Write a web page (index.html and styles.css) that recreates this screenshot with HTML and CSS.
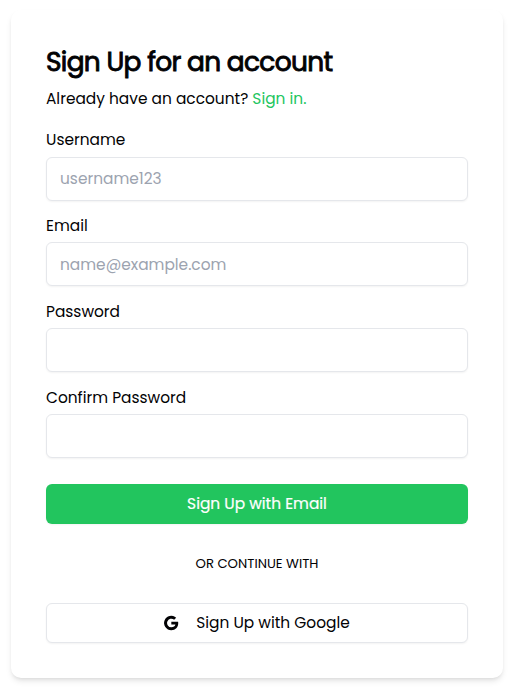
FILE: index.html
```html
<!DOCTYPE html>
<html lang="en">
<head>
<meta charset="utf-8">
<title>Sign Up</title>
<link rel="stylesheet" href="styles.css">
</head>
<body>
<main class="card">
  <h1 class="title">Sign Up for an account</h1>
  <p class="subtitle">Already have an account? <a class="link" href="#">Sign in.</a></p>
  <form class="form">
    <div class="field"><label for="username">Username</label><input id="username" type="text" placeholder="username123"></div>
    <div class="field"><label for="email">Email</label><input id="email" type="email" placeholder="name@example.com"></div>
    <div class="field"><label for="password">Password</label><input id="password" type="password"></div>
    <div class="field"><label for="confirm">Confirm Password</label><input id="confirm" type="password"></div>
    <button class="button primary" type="submit">Sign Up with Email</button>
  </form>
  <p class="divider">OR CONTINUE WITH</p>
  <button class="button google" type="button">
    <svg class="icon" viewBox="0 0 24 24" aria-hidden="true"><path d="M12.48 10.2v4.05h6.1c-.5 2.55-2.7 4.15-6.1 4.15A6.4 6.4 0 1 1 16.7 7.15l3.05-3.05A10.8 10.8 0 1 0 12.48 22.8c6.2 0 10.35-4.35 10.35-10.5 0-.75-.08-1.45-.2-2.1z"/></svg>
    <span>Sign Up with Google</span>
  </button>
</main>
</body>
</html>
```
FILE: styles.css
```css
* { box-sizing: border-box; }
body {
  margin: 0;
  padding: 10px 11px;
  background: #fff;
  color: #020204;
  font: 15.4px/24px Poppins, Inter, sans-serif;
}
h1, p { margin: 0; }
.card {
  height: 668px;
  padding: 34px 35px 35px;
  border-radius: 10px;
  background: #fff;
  box-shadow: 0 4px 6px -1px rgb(0 0 0 / .1), 0 2px 4px -2px rgb(0 0 0 / .1);
}
.title {
  font-size: 26.4px;
  line-height: 36px;
  font-weight: 400;
  letter-spacing: -.66px;
  -webkit-text-stroke: .9px;
  white-space: nowrap;
}
.subtitle { margin-top: 7px; white-space: nowrap; }
.link { color: #22c55e; text-decoration: none; }
.form { margin-top: 17.45px; }
.field { height: 85.7px; }
label { display: block; width: max-content; margin-bottom: 4.25px; }
input {
  display: block;
  width: 100%;
  height: 44px;
  padding: 0 13px;
  border: 1px solid #e5e7eb;
  border-radius: 6px;
  background: #fff;
  font: inherit;
  box-shadow: 0 1px 2px rgb(0 0 0 / .05);
}
input::placeholder { color: #9ca3af; opacity: 1; }
.button {
  display: flex;
  align-items: center;
  justify-content: center;
  width: 100%;
  height: 40px;
  padding: 0;
  border: 1px solid #e5e7eb;
  border-radius: 6px;
  background: #fff;
  color: #020204;
  font: inherit;
  box-shadow: 0 1px 2px rgb(0 0 0 / .05);
}
.primary {
  margin-top: 12.75px;
  border: 0;
  background: #22c55e;
  color: #fff;
  -webkit-text-stroke: .2px;
}
.divider {
  margin-top: 30px;
  text-align: center;
  font-size: 13.2px;
  line-height: 20px;
}
.google { margin-top: 29px; padding-right: 1px; gap: 17px; }
.icon { width: 16px; height: 16px; fill: #020204; }
```
